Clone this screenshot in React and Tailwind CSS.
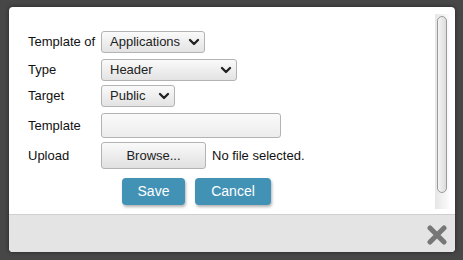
import { ChevronDown } from "lucide-react";

function Select({ value, width }) {
  return (
    <div
      className={`flex items-center justify-between h-[22px] ${width} pl-[8px] pr-[2px] rounded-[3px] border border-[#b3b3b3] bg-gradient-to-b from-[#fafafa] to-[#e3e3e3] text-[13px] text-[#222]`}
    >
      <span>{value}</span>
      <ChevronDown size={16} strokeWidth={3.5} className="text-[#222]" />
    </div>
  );
}

function Row({ label, children, h }) {
  return (
    <div className={`flex items-center ${h}`}>
      <div className="w-[73px] text-[13px] text-[#111]">{label}</div>
      {children}
    </div>
  );
}

export default function App() {
  return (
    <div
      className="w-[463px] h-[260px] bg-[#474747] pt-[7px] pl-[9px]"
      style={{ fontFamily: '"Liberation Sans", Arial, sans-serif' }}
    >
      <div className="w-[446px] h-[245px] bg-white rounded-[4px] shadow-[0_0_4px_rgba(0,0,0,0.5)] flex flex-col overflow-hidden">
        <div className="flex h-[207px]">
          <div className="flex-1 pl-[19px] pt-[24px] flex flex-col">
            <Row label="Template of" h="h-[22px]">
              <Select value="Applications" width="w-[104px]" />
            </Row>
            <div className="h-[5px]" />
            <Row label="Type" h="h-[23px]">
              <Select value="Header" width="w-[136px]" />
            </Row>
            <div className="h-[4px]" />
            <Row label="Target" h="h-[22px]">
              <Select value="Public" width="w-[74px]" />
            </Row>
            <div className="h-[6px]" />
            <Row label="Template" h="h-[25px]">
              <div className="w-[180px] h-[25px] rounded-[3px] border border-[#b3b3b3] bg-gradient-to-b from-[#fafafa] to-[#ececec]" />
            </Row>
            <div className="h-[4px]" />
            <Row label="Upload" h="h-[27px]">
              <div className="w-[105px] h-[27px] flex items-center justify-center rounded-[3px] border border-[#b3b3b3] bg-gradient-to-b from-[#fafafa] to-[#e0e0e0] text-[13px] text-[#222]">
                Browse...
              </div>
              <span className="ml-[6px] text-[13px] text-[#111]">No file selected.</span>
            </Row>
            <div className="h-[9px]" />
            <div className="flex gap-[10px] pl-[94px]">
              <div className="w-[63px] h-[27px] flex items-center justify-center rounded-[4px] bg-[#4292b6] text-white text-[14px] shadow-[1px_2px_3px_rgba(0,0,0,0.3)]">
                Save
              </div>
              <div className="w-[76px] h-[27px] flex items-center justify-center rounded-[4px] bg-[#4292b6] text-white text-[14px] shadow-[1px_2px_3px_rgba(0,0,0,0.3)]">
                Cancel
              </div>
            </div>
          </div>
          <div className="w-[14px] mt-[7px] mb-[5px] mr-[6px] bg-gradient-to-r from-[#e6e6e6] to-[#fbfbfb] px-[2px] pt-[2px]">
            <div className="h-[177px] rounded-full border border-[#9a9a9a] bg-gradient-to-r from-[#f4f4f4] to-[#dcdcdc]" />
          </div>
        </div>
        <div className="flex-1 bg-[#e4e4e4] border-t border-[#cfcfcf] flex justify-end items-start pt-[10px] pr-[8px]">
          <svg width="20" height="20" viewBox="0 0 20 20">
            <path
              d="M3 3 L17 17 M17 3 L3 17"
              stroke="#777"
              strokeWidth="5"
              strokeLinecap="round"
            />
          </svg>
        </div>
      </div>
    </div>
  );
}
